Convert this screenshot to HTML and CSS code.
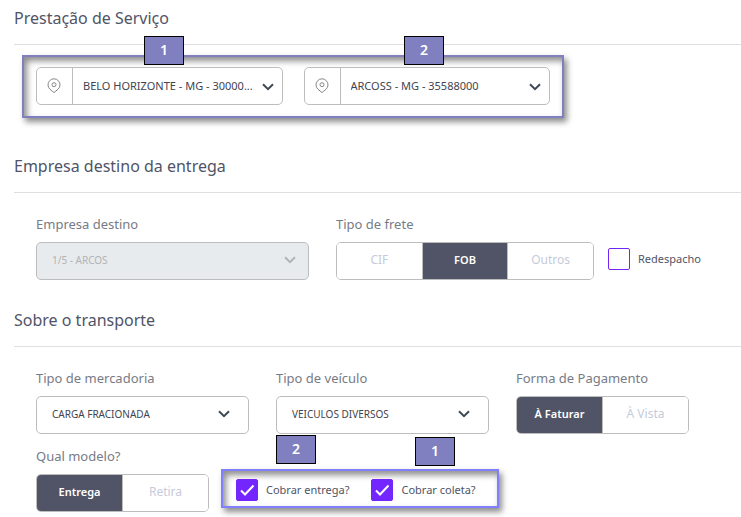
FILE: index.html
```html
<!DOCTYPE html>
<html lang="pt-BR">
<head>
<meta charset="utf-8">
<title>Prestação de Serviço</title>
<link rel="stylesheet" href="styles.css">
</head>
<body>
<main>
  <section>
    <h2>Prestação de Serviço</h2>
    <div class="route">
      <div class="frame route-frame">
        <div class="place">
          <svg class="pin" viewBox="0 0 14 16" aria-hidden="true"><path d="M7 14.6 2.9 11.2A6 6 0 1 1 11.1 11.2Z"/><circle cx="7" cy="6.7" r="2"/></svg>
          <div class="select">
            <select aria-label="Origem"><option>BELO HORIZONTE - MG - 30000...</option></select>
            <svg class="chevron" viewBox="0 0 12 8" aria-hidden="true"><path d="M1 1.2 6 6.2 11 1.2"/></svg>
          </div>
        </div>
        <div class="place">
          <svg class="pin" viewBox="0 0 14 16" aria-hidden="true"><path d="M7 14.6 2.9 11.2A6 6 0 1 1 11.1 11.2Z"/><circle cx="7" cy="6.7" r="2"/></svg>
          <div class="select">
            <select aria-label="Destino"><option>ARCOSS - MG - 35588000</option></select>
            <svg class="chevron" viewBox="0 0 12 8" aria-hidden="true"><path d="M1 1.2 6 6.2 11 1.2"/></svg>
          </div>
        </div>
        <span class="badge origin">1</span>
        <span class="badge destination">2</span>
      </div>
    </div>
  </section>

  <section>
    <h2>Empresa destino da entrega</h2>
    <div class="row company">
      <div class="field">
        <label for="empresa">Empresa destino</label>
        <div class="select boxed disabled">
          <select id="empresa" disabled><option>1/5 - ARCOS</option></select>
          <svg class="chevron" viewBox="0 0 12 8" aria-hidden="true"><path d="M1 1.2 6 6.2 11 1.2"/></svg>
        </div>
      </div>
      <div class="field">
        <span class="label" id="frete">Tipo de frete</span>
        <div class="segments" role="group" aria-labelledby="frete">
          <button type="button">CIF</button>
          <button type="button" class="active">FOB</button>
          <button type="button">Outros</button>
        </div>
      </div>
      <label class="check lone"><input type="checkbox"><span>Redespacho</span></label>
    </div>
  </section>

  <section>
    <h2>Sobre o transporte</h2>
    <div class="row transport">
      <div class="field">
        <label for="mercadoria">Tipo de mercadoria</label>
        <div class="select boxed">
          <select id="mercadoria"><option>CARGA FRACIONADA</option></select>
          <svg class="chevron" viewBox="0 0 12 8" aria-hidden="true"><path d="M1 1.2 6 6.2 11 1.2"/></svg>
        </div>
      </div>
      <div class="field">
        <label for="veiculo">Tipo de veículo</label>
        <div class="select boxed">
          <select id="veiculo"><option>VEICULOS DIVERSOS</option></select>
          <svg class="chevron" viewBox="0 0 12 8" aria-hidden="true"><path d="M1 1.2 6 6.2 11 1.2"/></svg>
        </div>
      </div>
      <div class="field">
        <span class="label" id="pagamento">Forma de Pagamento</span>
        <div class="segments" role="group" aria-labelledby="pagamento">
          <button type="button" class="active">À Faturar</button>
          <button type="button">À Vista</button>
        </div>
      </div>
    </div>
    <div class="row model">
      <div class="field">
        <span class="label" id="modelo">Qual modelo?</span>
        <div class="segments" role="group" aria-labelledby="modelo">
          <button type="button" class="active">Entrega</button>
          <button type="button">Retira</button>
        </div>
      </div>
      <div class="frame charge-frame">
        <label class="check"><input type="checkbox" checked><svg class="tick" viewBox="0 0 22 22" aria-hidden="true"><path d="M5 11.5 9 15.500 17.500 6.500"/></svg><span>Cobrar entrega?</span></label>
        <label class="check"><input type="checkbox" checked><svg class="tick" viewBox="0 0 22 22" aria-hidden="true"><path d="M5 11.5 9 15.500 17.500 6.500"/></svg><span>Cobrar coleta?</span></label>
        <span class="badge delivery">2</span>
        <span class="badge pickup">1</span>
      </div>
    </div>
  </section>
</main>
</body>
</html>
```
FILE: styles.css
```css
* {
  box-sizing: border-box;
}

body {
  margin: 0;
  background: #fff;
  color: #505466;
  font-family: "Noto Sans", "Open Sans", sans-serif;
  font-size: 11px;
}

main {
  padding-left: 14px;
}

h2 {
  margin: 0;
  padding: 6px 0 14px;
  border-bottom: 1px solid #dfdfdf;
  font-size: 16px;
  font-weight: 400;
  line-height: 24px;
}

.route {
  display: grid;
  grid-template-columns: 542fr 177fr;
  padding: 10px 0 30px 8px;
}

.frame {
  position: relative;
  border: 2px solid #8080c0;
  box-shadow: 3px 4px 6px rgba(0, 0, 0, 0.45), inset 3px 4px 6px rgba(0, 0, 0, 0.45);
}

.route-frame {
  display: grid;
  grid-template-columns: 1fr 1fr;
  gap: 21px;
  padding: 10px 12px 11px;
}

.place {
  display: flex;
  align-items: center;
  height: 38px;
  border: 1px solid #bdbdbd;
  border-radius: 5px;
  background: #fff;
}

.pin {
  flex: none;
  width: 14px;
  height: 16px;
  margin: 0 11px 0 10px;
  fill: none;
  stroke: #888;
  stroke-width: 1;
}

.place .select {
  flex: 1;
  min-width: 0;
  border-left: 1px solid #bdbdbd;
}

.select {
  position: relative;
  height: 36px;
}

select {
  width: 100%;
  height: 100%;
  padding: 0 24px 1px 10px;
  border: 0;
  background: transparent;
  color: #3f4450;
  font-family: inherit;
  font-size: 11px;
  appearance: none;
}

.chevron {
  position: absolute;
  top: 15px;
  right: 8px;
  width: 12px;
  height: 8px;
  fill: none;
  stroke: #3f4954;
  stroke-width: 2;
  pointer-events: none;
}

.boxed {
  height: 38px;
  border: 1px solid #bdbdbd;
  border-radius: 5px;
}

.boxed select {
  padding: 0 36px 3px 15px;
  font-size: 10px;
}

.boxed .chevron {
  top: 13px;
  right: 18px;
}

.disabled {
  background: #e8ebed;
}

.disabled select {
  color: #b0b3b5;
  opacity: 1;
}

.disabled .chevron {
  right: 12px;
  stroke: #b0b3b5;
}

.row {
  display: grid;
  align-items: end;
  padding-left: 22px;
}

.company {
  grid-template-columns: 273fr 27fr 258fr 14fr 133fr;
  padding-top: 19px;
  padding-bottom: 22px;
}

.company > :nth-child(2) {
  grid-column: 3;
}

.company > :nth-child(3) {
  grid-column: 5;
}

.transport {
  grid-template-columns: 213fr 213fr 173fr 25fr;
  gap: 27px;
  padding-top: 19px;
}

.model {
  grid-template-columns: 173fr 278fr 230fr;
  gap: 12px;
  padding-top: 10px;
  padding-bottom: 5px;
}

.field > label,
.label {
  display: block;
  margin-bottom: 6px;
  color: #777b86;
  font-size: 13px;
  line-height: 24px;
}

.segments {
  display: flex;
  height: 38px;
  overflow: hidden;
  border: 1px solid #bdbdbd;
  border-radius: 5px;
}

.segments button {
  flex: 1 1 0;
  min-width: 0;
  padding: 0 0 3px;
  border: 0;
  background: #fff;
  color: #c6cbdb;
  font-family: inherit;
  font-size: 12px;
  font-weight: 400;
}

.segments button + button {
  border-left: 1px solid #bdbdbd;
}

.segments .active {
  background: #505466;
  color: #fff;
  font-size: 11px;
  font-weight: 600;
}

.check {
  position: relative;
  display: flex;
  align-items: center;
  gap: 8px;
  white-space: nowrap;
}

.check span {
  padding-bottom: 2px;
}

.check input {
  flex: none;
  width: 22px;
  height: 22px;
  margin: 0;
  border: 1px solid #7326f5;
  border-radius: 2px;
  background: #fff;
  appearance: none;
}

.check input:checked {
  background: #7326ff;
}

.lone {
  margin-bottom: 10px;
}

.tick {
  position: absolute;
  left: 0;
  width: 22px;
  height: 22px;
  fill: none;
  stroke: #fff;
  stroke-width: 2;
  pointer-events: none;
}

.charge-frame {
  display: flex;
  align-items: center;
  gap: 22px;
  height: 39px;
  margin-bottom: 4px;
  padding: 3px 13px 0;
  border-color: #8080ff;
}

.badge {
  position: absolute;
  width: 40px;
  height: 29px;
  border: 1px solid #000;
  background: #8080c0;
  color: #fff;
  font-size: 14px;
  font-weight: 600;
  line-height: 26px;
  text-align: center;
}

.origin {
  top: -21px;
  left: 120px;
}

.destination {
  top: -21px;
  right: 118px;
}

.delivery {
  top: -36px;
  left: 53px;
}

.pickup {
  top: -34px;
  right: 42px;
}
```
